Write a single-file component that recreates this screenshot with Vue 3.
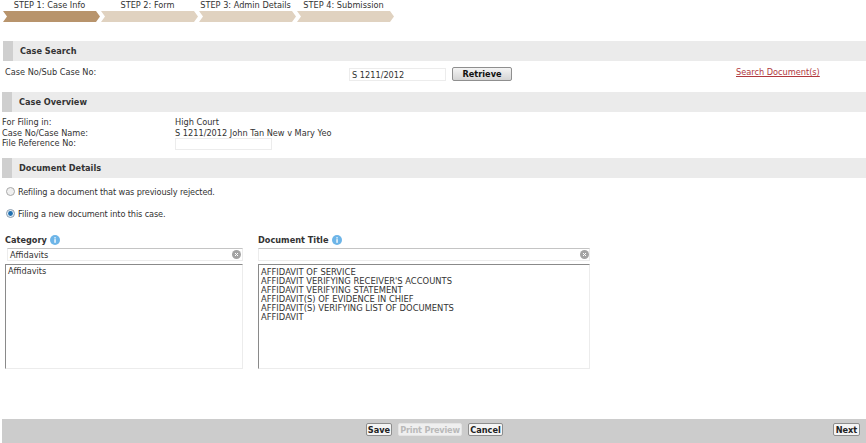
<script setup>
const steps = [
  { label: 'STEP 1: Case Info', active: true },
  { label: 'STEP 2: Form', active: false },
  { label: 'STEP 3: Admin Details', active: false },
  { label: 'STEP 4: Submission', active: false }
]
const titles = [
  'AFFIDAVIT OF SERVICE',
  "AFFIDAVIT VERIFYING RECEIVER'S ACCOUNTS",
  'AFFIDAVIT VERIFYING STATEMENT',
  'AFFIDAVIT(S) OF EVIDENCE IN CHIEF',
  'AFFIDAVIT(S) VERIFYING LIST OF DOCUMENTS',
  'AFFIDAVIT'
]
</script>

<template>
  <div class="page">
    <div class="steps">
      <div v-for="s in steps" :key="s.label" class="step">
        <div class="step-label">{{ s.label }}</div>
        <div class="chevron" :class="{ active: s.active }"></div>
      </div>
    </div>

    <div class="bar first"><span class="bar-title">Case Search</span></div>
    <div class="search-row">
      <span class="search-label">Case No/Sub Case No:</span>
      <div class="field search-field">S 1211/2012</div>
      <button class="retrieve">Retrieve</button>
      <a class="link">Search Document(s)</a>
    </div>

    <div class="bar inset"><span class="bar-title">Case Overview</span></div>
    <div class="overview">
      <div class="ov-row"><span class="ov-label">For Filing in:</span><span>High Court</span></div>
      <div class="ov-row"><span class="ov-label">Case No/Case Name:</span><span>S 1211/2012 John Tan New v Mary Yeo</span></div>
      <div class="ov-row"><span class="ov-label">File Reference No:</span><div class="field ref-field"></div></div>
    </div>

    <div class="bar inset details"><span class="bar-title">Document Details</span></div>
    <div class="radios">
      <label class="radio-row">
        <svg class="radio" width="9" height="9" viewBox="0 0 9 9"><circle cx="4.5" cy="4.5" r="4" fill="#f0f0f0" stroke="#a9a9a9"/></svg>
        Refiling a document that was previously rejected.
      </label>
      <label class="radio-row second">
        <svg class="radio" width="9" height="9" viewBox="0 0 9 9"><circle cx="4.5" cy="4.5" r="4" fill="#e8f1f8" stroke="#8b9cad"/><circle cx="4.5" cy="4.5" r="2.4" fill="#1f6fb0"/></svg>
        Filing a new document into this case.
      </label>
    </div>

    <div class="pickers">
      <div class="picker cat">
        <div class="picker-title">Category
          <svg class="info" width="10" height="10" viewBox="0 0 11 11"><circle cx="5.5" cy="5.5" r="5.5" fill="#6db5e8"/><rect x="4.8" y="4.6" width="1.5" height="4" fill="#fff"/><rect x="4.8" y="2.4" width="1.5" height="1.4" fill="#fff"/></svg>
        </div>
        <div class="filter cat-filter">
          <span>Affidavits</span>
          <svg width="9" height="9" viewBox="0 0 9 9"><circle cx="4.5" cy="4.5" r="4.5" fill="#a3a3a3"/><path d="M3 3l3 3M6 3L3 6" stroke="#fff" stroke-width="1"/></svg>
        </div>
        <div class="listbox cats"><div>Affidavits</div></div>
      </div>
      <div class="picker doc">
        <div class="picker-title">Document Title
          <svg class="info" width="10" height="10" viewBox="0 0 11 11"><circle cx="5.5" cy="5.5" r="5.5" fill="#6db5e8"/><rect x="4.8" y="4.6" width="1.5" height="4" fill="#fff"/><rect x="4.8" y="2.4" width="1.5" height="1.4" fill="#fff"/></svg>
        </div>
        <div class="filter doc-filter">
          <span></span>
          <svg width="9" height="9" viewBox="0 0 9 9"><circle cx="4.5" cy="4.5" r="4.5" fill="#a3a3a3"/><path d="M3 3l3 3M6 3L3 6" stroke="#fff" stroke-width="1"/></svg>
        </div>
        <div class="listbox titles"><div v-for="t in titles" :key="t">{{ t }}</div></div>
      </div>
    </div>

    <div class="footer">
      <div class="footer-center">
        <button class="fbtn save">Save</button>
        <button class="fbtn disabled">Print Preview</button>
        <button class="fbtn cancel">Cancel</button>
      </div>
      <button class="fbtn next">Next</button>
    </div>
  </div>
</template>

<style>
html, body { margin: 0; background: #fff; }
</style>

<style scoped>
.page {
  width: 866px;
  height: 443px;
  overflow: hidden;
  position: relative;
  display: flex;
  flex-direction: column;
  font-family: "DejaVu Sans", Verdana, sans-serif;
  font-size: 8.2px;
  color: #333;
  background: #fff;
}
.steps { display: flex; padding-left: 3px; height: 22px; margin-bottom: 19px; }
.step { width: 98px; }
.step-label { height: 11px; line-height: 10px; text-align: center; padding-right: 5px; white-space: nowrap; box-sizing: border-box; }
.chevron {
  width: 97px;
  height: 11px;
  background: #e0d2c0;
  clip-path: polygon(0 0, 93px 0, 100% 50%, 93px 100%, 0 100%, 4px 50%);
}
.chevron.active { background: #b8946c; }
.bar {
  height: 20px;
  margin-left: 3px;
  background: #ebebeb;
  border-left: 10px solid #cfcfcf;
  display: flex;
  align-items: center;
  padding-left: 7px;
  font-weight: bold;
  color: #333;
  flex: none;
}
.bar.inset { margin-left: 2px; }
.search-row { height: 31px; position: relative; display: flex; align-items: flex-start; flex: none; }
.search-label { margin: 6px 0 0 5px; width: 344px; line-height: 11px; }
.field { border: 1px solid #ececec; background: #fff; box-sizing: border-box; }
.search-field { width: 97px; height: 13px; line-height: 12px; padding-left: 2px; margin-top: 7px; }
.retrieve {
  margin: 6px 0 0 6px;
  width: 60px;
  height: 14px;
  padding: 0;
  border: 1px solid #8f8f8f;
  border-radius: 2px;
  background: linear-gradient(#f4f4f4, #d4d4d4);
  font: bold 8.2px "DejaVu Sans", sans-serif;
  color: #111;
}
.link { margin: 6px 0 0 224px; color: #b0383e; text-decoration: underline; line-height: 11px; white-space: nowrap; }
.overview { height: 46px; padding: 5px 0 0 2px; box-sizing: border-box; flex: none; }
.ov-row { display: flex; height: 10.5px; line-height: 10.5px; }
.ov-label { width: 173px; }
.ref-field { width: 97px; height: 12px; margin-top: 0; }
.radios { height: 58px; position: relative; padding-top: 8px; box-sizing: border-box; flex: none; letter-spacing: -0.13px; }
.radio-row { display: flex; align-items: center; height: 11px; margin-left: 6px; white-space: nowrap; }
.radio-row.second { margin-top: 11px; }
.radio { margin-right: 3px; flex: none; }
.pickers { display: flex; height: 179px; padding-left: 5px; flex: none; }
.picker.cat { width: 238px; }
.picker.doc { width: 332px; margin-left: 15px; }
.picker-title { height: 11px; margin-top: -2px; display: flex; align-items: center; gap: 3px; font-weight: bold; white-space: nowrap; }
.doc .picker-title { gap: 4px; }
.filter {
  display: flex;
  justify-content: space-between;
  align-items: center;
  height: 13px;
  margin-top: 3px;
  box-sizing: border-box;
  border-top: 1px solid #c4c4c4;
  border-right: 1px solid #ececec;
  border-bottom: 1px solid #ececec;
  border-left: 1px solid #ececec;
  padding: 0 0 0 2px;
  color: #333;
}
.cat-filter { margin-left: 2px; padding-right: 1px; }
.listbox {
  margin-top: 3px;
  height: 105px;
  box-sizing: border-box;
  border-top: 1px solid #8a8a8a;
  border-left: 1px solid #8a8a8a;
  border-right: 1px solid #ececec;
  border-bottom: 1px solid #ececec;
  padding: 3px 2px;
  line-height: 9px;
}
.cats { padding-top: 2px; }
.titles { font-size: 8.4px; }
.footer {
  position: relative;
  margin: 4px 0 0 2px;
  height: 24px;
  background: #cccccc;
  display: flex;
  align-items: flex-start;
  flex: none;
}
.footer-center { display: flex; gap: 6px; margin: 4px 0 0 364px; }
.fbtn {
  height: 13px;
  padding: 0;
  border: 1px solid #8d8d8d;
  border-radius: 2px;
  background: #f4f4f4;
  font: bold 8.2px "DejaVu Sans", sans-serif;
  color: #222;
  white-space: nowrap;
}
.fbtn.save { width: 26px; }
.fbtn.disabled { width: 64px; color: #b9b9b9; border-color: #e4e4e4; background: #efefef; letter-spacing: -0.2px; }
.fbtn.cancel { width: 35px; }
.next { width: 27px; margin: 4px 6px 0 auto; }
</style>
